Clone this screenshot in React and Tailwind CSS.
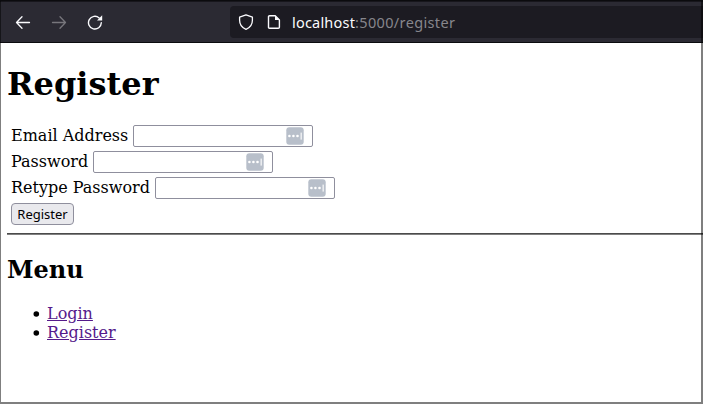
function ManagerIcon() {
  return (
    <svg width="18" height="18" viewBox="0 0 18 18" className="block">
      <rect x="0.3" y="0.3" width="17.4" height="17.4" rx="3" fill="#b8bfca" />
      <g fill="#fff">
        <circle cx="3.4" cy="9" r="1.3" />
        <circle cx="7.4" cy="9" r="1.3" />
        <circle cx="11.5" cy="9" r="1.3" />
        <rect x="14.6" y="5.6" width="1.1" height="7" />
      </g>
    </svg>
  );
}

function Field({ label, type }) {
  return (
    <label className="flex h-[22px] items-center">
      <span className="mr-[5px] whitespace-nowrap leading-[22px]">{label}</span>
      <span className="flex h-[22px] w-[180px] items-center rounded-[2px] border border-[#8f8f9d] bg-white pr-2">
        <input type={type} className="h-full min-w-0 flex-1 px-1 text-[13px] outline-none" />
        <ManagerIcon />
      </span>
    </label>
  );
}

function Toolbar() {
  return (
    <header className="flex h-[43px] items-center border-t-2 border-b border-t-[#17161c] border-b-[#0b0b0e] bg-[#2b2a33]">
      <div className="flex w-[230px] shrink-0 items-center gap-5 pl-[15px]">
        <svg width="16" height="16" viewBox="0 0 16 16" fill="none" stroke="#fbfbfe" strokeWidth="1.3" strokeLinecap="round" strokeLinejoin="round">
          <path d="M7 2.8 1.5 8.5 7 14.2M1.5 8.5H14.5" />
        </svg>
        <svg width="16" height="16" viewBox="0 0 16 16" fill="none" stroke="#77767c" strokeWidth="1.3" strokeLinecap="round" strokeLinejoin="round">
          <path d="M9 2.8 14.5 8.5 9 14.2M14.5 8.5H1.5" />
        </svg>
        <svg width="16" height="16" viewBox="0 0 16 16" fill="none" stroke="#fbfbfe" strokeWidth="1.4" strokeLinecap="round">
          <path d="M14.3 8.8A6.4 6.4 0 1 1 12.2 3.9" />
          <path d="M15.2 1.2V6.4H10z" fill="#fbfbfe" stroke="none" />
        </svg>
      </div>
      <div className="flex h-8 flex-1 items-center rounded-l-[4px] bg-[#1c1b22] pl-2">
        <svg width="16" height="16" viewBox="0 0 16 16" fill="none" stroke="#fbfbfe" strokeWidth="1.3" strokeLinejoin="round">
          <path d="M8 .8 14.4 3.1V6.2C14.4 10.4 12 13.7 8 15.3 4 13.7 1.6 10.4 1.6 6.2V3.1z" />
        </svg>
        <svg width="16" height="16" viewBox="0 0 16 16" fill="none" stroke="#fbfbfe" strokeWidth="1.4" strokeLinejoin="round" className="ml-3">
          <path d="M3.6 1.7H9.2L13.4 5.9V13.2Q13.4 14.3 12.3 14.3H3.6Q2.5 14.3 2.5 13.2V2.8Q2.5 1.7 3.6 1.7z" />
          <path d="M9 1.5V6H13.6z" fill="#fbfbfe" stroke="none" />
        </svg>
        <div className="ml-[10px] whitespace-nowrap font-['Noto_Sans',sans-serif] text-[14.5px] leading-5 text-[#87868c]">
          <span className="tracking-[0.2px] text-[#fbfbfe]">localhost</span><span className="tracking-[0.35px]">:5000/register</span>
        </div>
      </div>
    </header>
  );
}

function MenuItem({ children }) {
  return (
    <li className="flex h-[19px] items-center">
      <svg width="8" height="8" viewBox="0 0 8 8" className="mt-px mr-[7px] ml-[25px]">
        <circle cx="4.3" cy="4" r="2.8" />
      </svg>
      <a className="leading-[19px] text-[#551a8b] underline">{children}</a>
    </li>
  );
}

export default function App() {
  return (
    <div className="relative h-[404px] w-[703px] overflow-hidden bg-white font-['DejaVu_Serif',serif] text-[16px] text-black">
      <Toolbar />
      <main className="pl-[7px]">
        <h1 className="mt-[23px] h-[37px] text-[32px] leading-[37px] font-bold">Register</h1>
        <form className="mt-[22px] flex flex-col items-start gap-1 pl-1">
          <Field label="Email Address" type="email" />
          <Field label="Password" type="password" />
          <Field label="Retype Password" type="password" />
          <button type="button" className="h-[22px] w-[63px] rounded-[4px] border border-[#8f8f9d] bg-[#e9e9ed] font-['Noto_Sans',sans-serif] text-[13px] leading-5">
            Register
          </button>
        </form>
        <hr className="mt-2 h-0.5 border-t border-b border-t-[#4b4b4b] border-b-[#808080]" />
        <h2 className="mt-[21px] h-7 text-[24px] leading-7 font-bold">Menu</h2>
        <ul className="mt-5">
          <MenuItem>Login</MenuItem>
          <MenuItem>Register</MenuItem>
        </ul>
      </main>
      <div className="pointer-events-none absolute inset-0 border-t border-r-2 border-b-2 border-l border-black/50" />
    </div>
  );
}
